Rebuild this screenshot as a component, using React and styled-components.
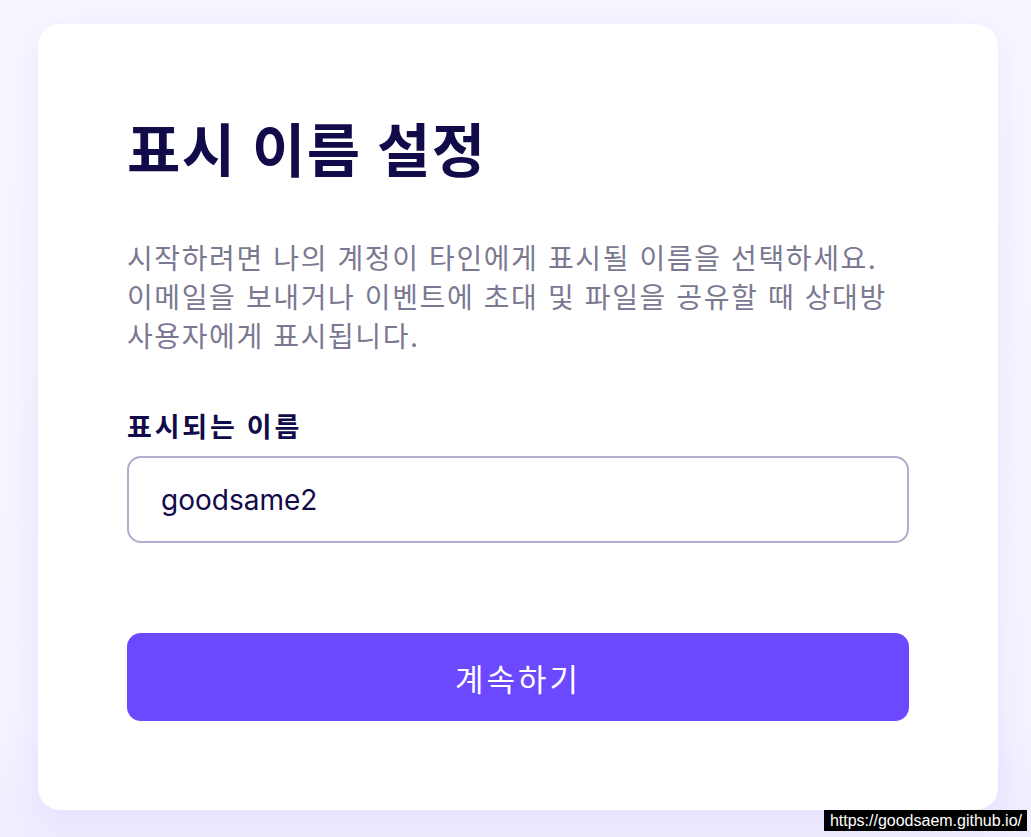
import React from 'react'
import styled, { createGlobalStyle } from 'styled-components'

const GlobalStyle = createGlobalStyle`
    html, body {
        margin: 0;
        padding: 0;
        background-color: #f8f7ff;
        font-family: "Inter", "Noto Sans CJK KR", sans-serif;
    }
`;

const Page = styled.div`
    min-height: 837px;
    padding: 24px 33px 27px 38px;
    box-sizing: border-box;
    background: linear-gradient(180deg, #f8f7ff 0%, #f5f4ff 85%, #efedff 100%);
`;

const Card = styled.div`
    width: 960px;
    height: 786px;
    box-sizing: border-box;
    padding: 92px 89px 0 89px;
    background-color: #fff;
    border-radius: 22px;
    box-shadow: 0 8px 40px rgba(108, 72, 255, 0.1);
`;

const Title = styled.h1`
    margin: 0;
    font-size: 58px;
    line-height: 70px;
    font-weight: 700;
    letter-spacing: 1.5px;
    color: #110b4a;
`;

const Description = styled.p`
    margin: 54px 0 0;
    font-size: 28px;
    line-height: 39px;
    letter-spacing: 1.6px;
    color: #7b7992;
`;

const Label = styled.label`
    display: block;
    margin-top: 55px;
    font-size: 27px;
    line-height: 32px;
    font-weight: 700;
    letter-spacing: 2.8px;
    color: #110b4a;
`;

const Input = styled.input`
    display: block;
    width: 100%;
    height: 87px;
    margin-top: 12px;
    box-sizing: border-box;
    padding: 0 32px;
    border: 2px solid #b0adcd;
    border-radius: 14px;
    font-family: "Inter", "Noto Sans CJK KR", sans-serif;
    font-size: 28px;
    color: #110b4a;
    outline: none;
`;

const Button = styled.button`
    display: block;
    width: 100%;
    height: 88px;
    margin-top: 90px;
    border: none;
    border-radius: 14px;
    background-color: #6c48ff;
    color: #fff;
    font-family: "Inter", "Noto Sans CJK KR", sans-serif;
    font-size: 31px;
    letter-spacing: 3px;
    cursor: pointer;
`;

const UrlBadge = styled.div`
    position: fixed;
    right: 4px;
    bottom: 6px;
    padding: 0 5px 0 6px;
    background-color: #000;
    color: #fff;
    font-family: "Liberation Sans", Arial, sans-serif;
    font-size: 16px;
    line-height: 21px;
`;

export default function App() {
    return <Page>
        <GlobalStyle />
        <Card>
            <Title>표시 이름 설정</Title>
            <Description>
                시작하려면 나의 계정이 타인에게 표시될 이름을 선택하세요.<br />
                이메일을 보내거나 이벤트에 초대 및 파일을 공유할 때 상대방<br />
                사용자에게 표시됩니다.
            </Description>
            <Label htmlFor="displayName">표시되는 이름</Label>
            <Input id="displayName" defaultValue="goodsame2" />
            <Button>계속하기</Button>
        </Card>
        <UrlBadge>https://goodsaem.github.io/</UrlBadge>
    </Page>
}
